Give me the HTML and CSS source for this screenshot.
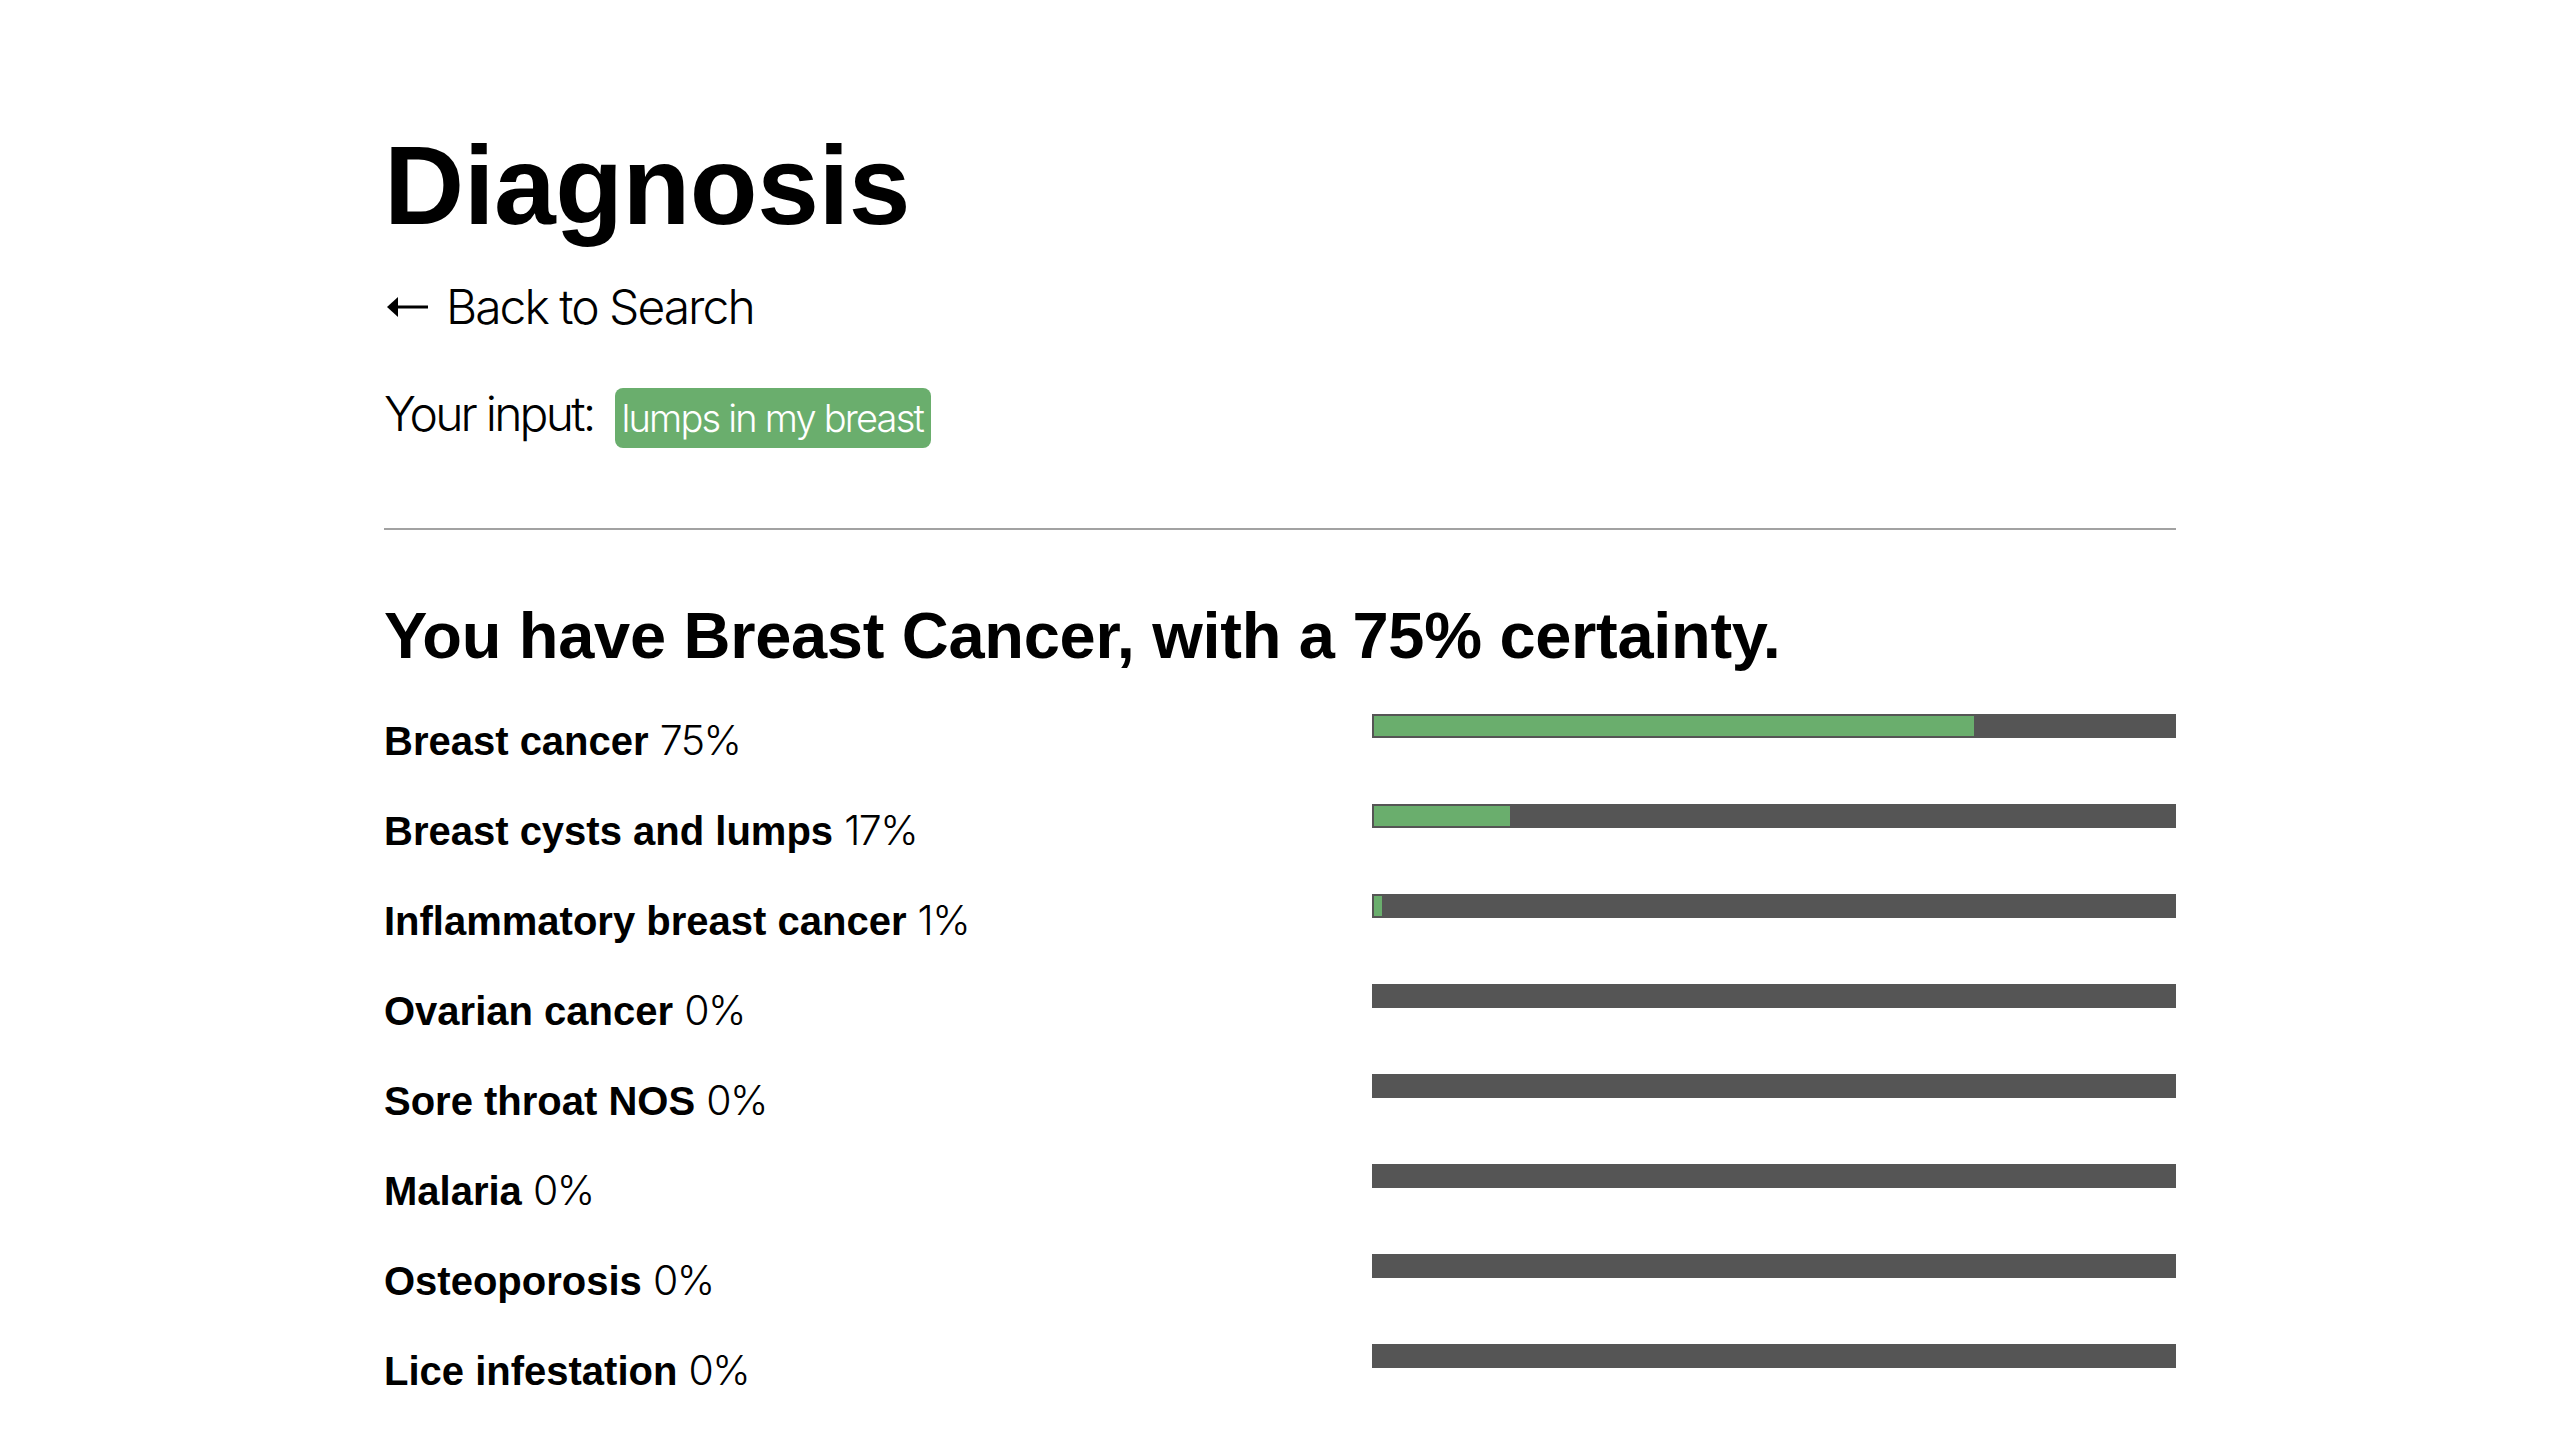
FILE: index.html
```html
<!DOCTYPE html>
<html lang="en">
<head>
<meta charset="utf-8">
<title>Diagnosis</title>
<link rel="stylesheet" href="styles.css">
</head>
<body>
<main class="page">
  <h1 class="title">Diagnosis</h1>
  <a class="back" href="#">
    <svg class="back-arrow" viewBox="0 0 41 22" width="41" height="22" aria-hidden="true">
      <polygon points="0,11 11,1 11,21" fill="#000"/>
      <rect x="8" y="9.5" width="33" height="3" fill="#000"/>
    </svg>
    <span>Back to Search</span>
  </a>
  <div class="input-row">
    <span class="input-label">Your input:</span>
    <span class="tag">lumps in my breast</span>
  </div>
  <hr class="divider">
  <h2 class="verdict">You have Breast Cancer, with a 75% certainty.</h2>
  <ul class="results">
    <li class="result">
      <div class="result-label"><b>Breast cancer</b> <span class="pct">75%</span></div>
      <div class="bar"><div class="bar-fill" style="width:75%"></div></div>
    </li>
    <li class="result">
      <div class="result-label"><b>Breast cysts and lumps</b> <span class="pct">17%</span></div>
      <div class="bar"><div class="bar-fill" style="width:17%"></div></div>
    </li>
    <li class="result">
      <div class="result-label"><b>Inflammatory breast cancer</b> <span class="pct">1%</span></div>
      <div class="bar"><div class="bar-fill" style="width:1%"></div></div>
    </li>
    <li class="result">
      <div class="result-label"><b>Ovarian cancer</b> <span class="pct">0%</span></div>
      <div class="bar"><div class="bar-fill" style="width:0%"></div></div>
    </li>
    <li class="result">
      <div class="result-label"><b>Sore throat NOS</b> <span class="pct">0%</span></div>
      <div class="bar"><div class="bar-fill" style="width:0%"></div></div>
    </li>
    <li class="result">
      <div class="result-label"><b>Malaria</b> <span class="pct">0%</span></div>
      <div class="bar"><div class="bar-fill" style="width:0%"></div></div>
    </li>
    <li class="result">
      <div class="result-label"><b>Osteoporosis</b> <span class="pct">0%</span></div>
      <div class="bar"><div class="bar-fill" style="width:0%"></div></div>
    </li>
    <li class="result">
      <div class="result-label"><b>Lice infestation</b> <span class="pct">0%</span></div>
      <div class="bar"><div class="bar-fill" style="width:0%"></div></div>
    </li>
  </ul>
</main>
</body>
</html>
```
FILE: styles.css
```css
html, body {
  margin: 0;
  padding: 0;
  background: #fff;
  color: #000;
  font-family: "Liberation Sans", Arial, sans-serif;
}

.page {
  width: 1792px;
  margin: 0 0 0 384px;
  padding-top: 131px;
}

.title {
  margin: 0;
  font-size: 111px;
  line-height: 1;
  font-weight: 700;
  letter-spacing: -0.5px;
}

.back {
  display: flex;
  align-items: center;
  gap: 18px;
  margin-top: 41px;
  height: 48px;
  color: #000;
  text-decoration: none;
  font-family: Inter, "Liberation Sans", sans-serif;
  font-weight: 300;
  font-size: 48px;
  line-height: 1;
  letter-spacing: -2px;
}

.back-arrow {
  margin-left: 3px;
  flex: none;
}

.input-row {
  display: flex;
  align-items: center;
  gap: 22px;
  margin-top: 57px;
  height: 60px;
  font-family: Inter, "Liberation Sans", sans-serif;
  font-weight: 300;
}

.input-label {
  font-size: 48px;
  line-height: 1;
  letter-spacing: -2.8px;
  margin-bottom: 8px;
}

.tag {
  background: #6aae6d;
  color: #fff;
  border-radius: 8px;
  font-size: 38px;
  line-height: 1;
  letter-spacing: -1.8px;
  padding: 11px 8px 11px 6px;
}

.divider {
  margin: 80px 0 0;
  height: 0;
  border: none;
  border-top: 2px solid #a2a2a2;
}

.verdict {
  margin: 73px 0 0;
  font-size: 65px;
  line-height: 1;
  font-weight: 700;
  letter-spacing: -0.3px;
}

.results {
  list-style: none;
  margin: 46px 0 0;
  padding: 0;
}

.result {
  display: grid;
  grid-template-columns: 988px 804px;
  height: 90px;
}

.result-label {
  margin-top: 6px;
  font-size: 40px;
  line-height: 1;
}

.result-label b {
  font-weight: 700;
}

.pct {
  font-family: Inter, "Liberation Sans", sans-serif;
  font-weight: 300;
  font-size: 41px;
  letter-spacing: -1.5px;
}

.bar {
  height: 24px;
  padding: 2px;
  box-sizing: border-box;
  background: #555;
}

.bar-fill {
  height: 20px;
  background: #6aae6d;
}
```
